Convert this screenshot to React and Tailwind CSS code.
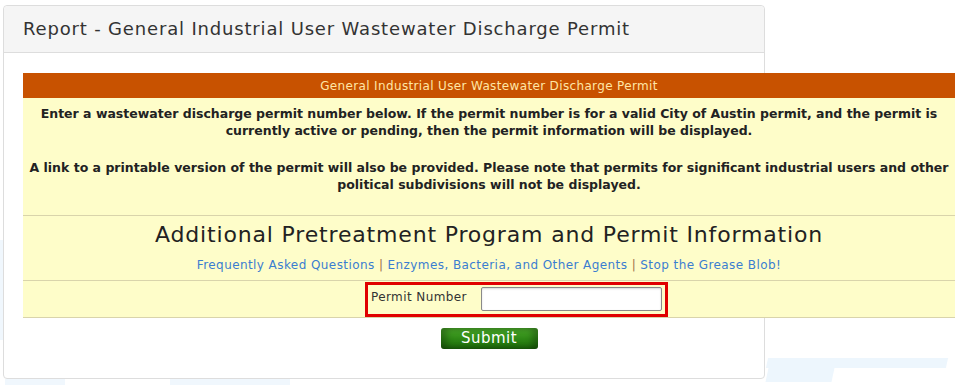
export default function App() {
  const font = { fontFamily: '"DejaVu Sans", Verdana, sans-serif' };
  return (
    <div className="relative w-[962px] h-[385px] overflow-hidden bg-white" style={font}>
      {/* faint background decoration */}
      <div className="absolute left-[767px] top-[358px] w-[180px] h-[10px] bg-[#edf6fd] -skew-x-12" />
      <div className="absolute left-[767px] top-[368px] w-[66px] h-[14px] bg-[#edf6fd] -skew-x-12" />
      <div className="absolute left-[5px] top-[379px] w-[60px] h-[6px] bg-[#f0f7fd]" />
      <div className="absolute left-[170px] top-[379px] w-[120px] h-[6px] bg-[#f0f7fd]" />
      <div className="absolute left-[0px] top-[240px] w-[3px] h-[100px] bg-[#f0f7fd]" />

      <div className="relative ml-[3px] mt-[5px] w-[762px] h-[374px] border border-[#dddddd] rounded-[4px] bg-white">
        <div className="h-[47px] bg-[#f5f5f5] border-b border-[#dddddd] rounded-t-[4px] flex items-center pl-[19px]">
          <span className="text-[18px] tracking-[0.83px] text-[#333333] leading-none">Report - General Industrial User Wastewater Discharge Permit</span>
        </div>
        <div className="pt-[20px] pl-[19px]">
          <div className="w-[932px]">
            <div className="h-[25px] bg-[#c85200] text-[#ffe6a6] text-[12px] tracking-[0.35px] flex items-center justify-center">
              General Industrial User Wastewater Discharge Permit
            </div>
            <div className="bg-[#fefdc9] border-b border-[#d9d4ab] text-[12.5px] font-bold text-[#222222] text-center leading-[17px] pt-[7px] pb-[22px] whitespace-nowrap">
              <p>Enter a wastewater discharge permit number below. If the permit number is for a valid City of Austin permit, and the permit is<br />currently active or pending, then the permit information will be displayed.</p>
              <p className="mt-[20px]">A link to a printable version of the permit will also be provided. Please note that permits for significant industrial users and other<br />political subdivisions will not be displayed.</p>
            </div>
            <div className="bg-[#fefdc9] border-b border-[#d9d4ab] text-center h-[65px] pt-[5px]">
              <div className="text-[22px] tracking-[0.83px] text-[#222222] leading-[28px]">Additional Pretreatment Program and Permit Information</div>
              <div className="text-[12px] tracking-[0.42px] mt-[8px] leading-[16px]">
                <span className="text-[#3b7dd0]">Frequently Asked Questions</span>
                <span className="text-[#a0704a]"> | </span>
                <span className="text-[#3b7dd0]">Enzymes, Bacteria, and Other Agents</span>
                <span className="text-[#a0704a]"> | </span>
                <span className="text-[#3b7dd0]">Stop the Grease Blob!</span>
              </div>
            </div>
            <div className="bg-[#fefdc9] border-b border-[#d9d4ab] h-[37px] flex items-center pl-[342px]">
              <div className="flex items-start border-[3px] border-[#e00000] w-[303px] h-[35px] pl-[3px] pt-[2px]">
                <span className="text-[12px] tracking-[0.4px] text-[#333333] mt-[1px] w-[110px]">Permit Number</span>
                <div className="w-[181px] h-[24px] bg-white border border-[#8a8a8a] rounded-[2px] shadow-[inset_0_1px_2px_rgba(0,0,0,0.15)]" />
              </div>
            </div>
            <div className="flex justify-center pt-[10px]">
              <div className="w-[97px] h-[21px] rounded-[3px] bg-gradient-to-b from-[#4aa82a] via-[#2f8a16] to-[#1d6a0a] flex items-center justify-center text-white text-[15px] tracking-[0.5px] leading-none shadow-[inset_6px_0_6px_rgba(0,0,0,0.25),inset_-6px_0_6px_rgba(0,0,0,0.25)]">
                Submit
              </div>
            </div>
          </div>
        </div>
      </div>
    </div>
  );
}
